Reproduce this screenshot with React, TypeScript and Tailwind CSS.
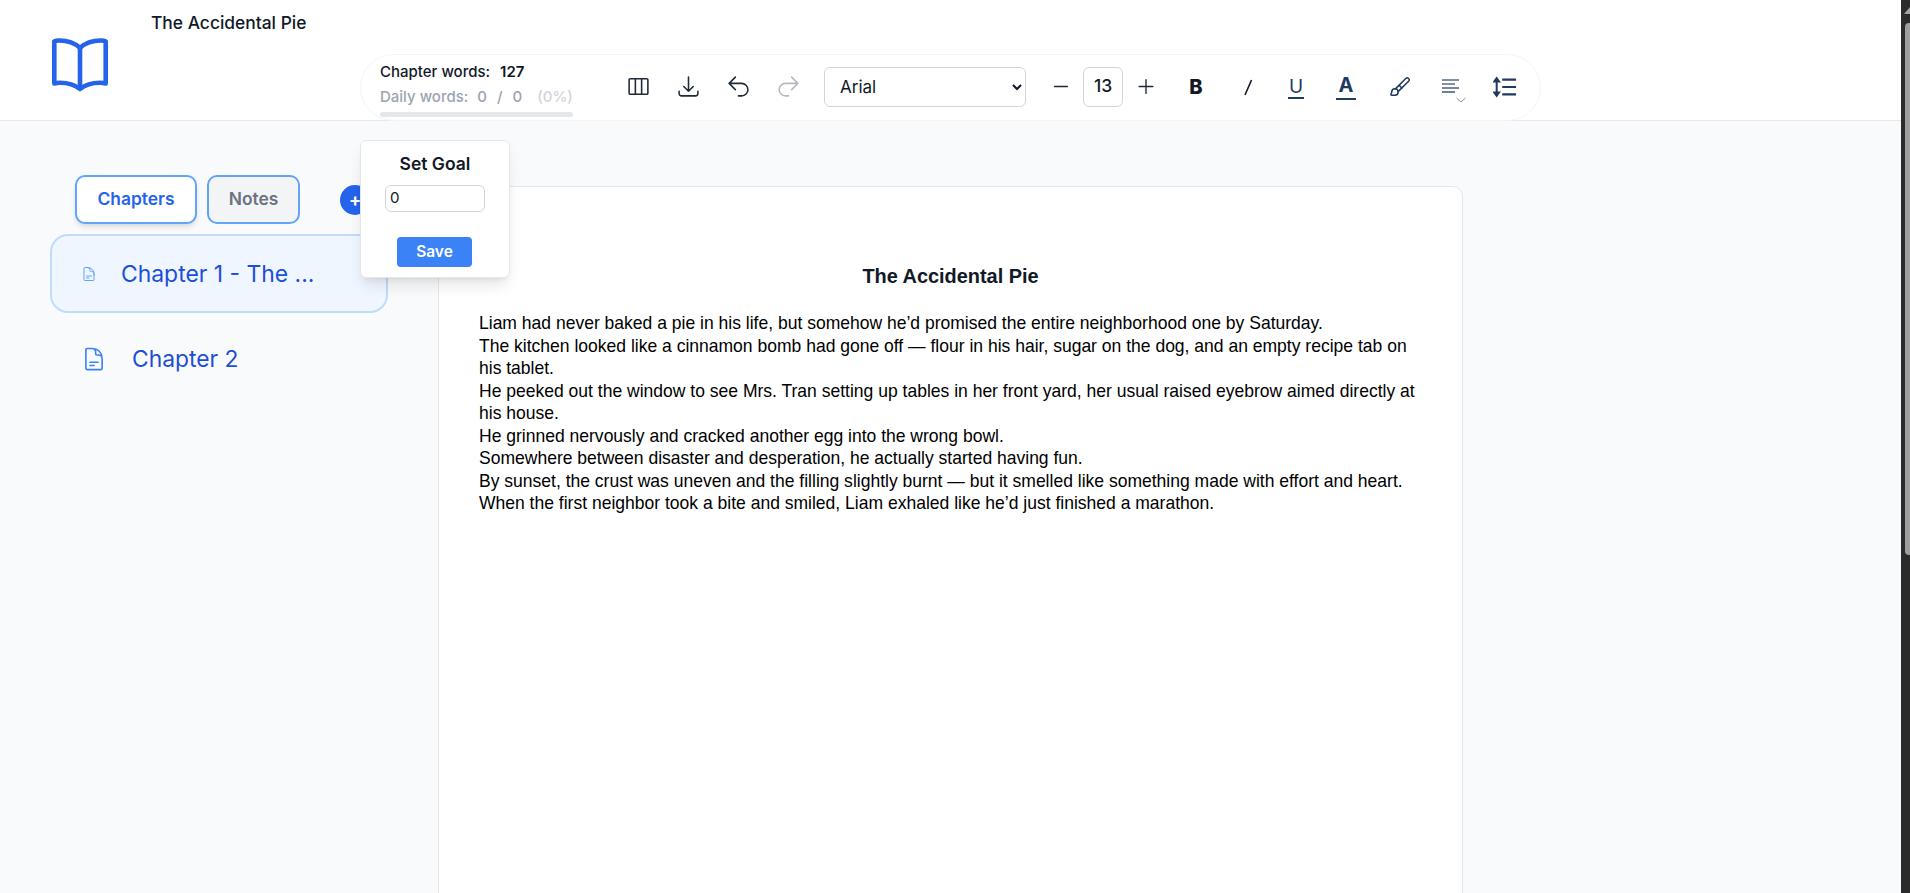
import React from "react";
import { Brush } from "lucide-react";
import {
  HiOutlineViewColumns,
  HiOutlineArrowDownTray,
  HiOutlineArrowUturnLeft,
  HiOutlineArrowUturnRight,
  HiOutlineMinus,
  HiOutlinePlus,
  HiOutlineDocumentText,
} from "react-icons/hi2";

const lines = [
  "Liam had never baked a pie in his life, but somehow he’d promised the entire neighborhood one by Saturday.",
  "The kitchen looked like a cinnamon bomb had gone off — flour in his hair, sugar on the dog, and an empty recipe tab on his tablet.",
  "He peeked out the window to see Mrs. Tran setting up tables in her front yard, her usual raised eyebrow aimed directly at his house.",
  "He grinned nervously and cracked another egg into the wrong bowl.",
  "Somewhere between disaster and desperation, he actually started having fun.",
  "By sunset, the crust was uneven and the filling slightly burnt — but it smelled like something made with effort and heart.",
  "When the first neighbor took a bite and smiled, Liam exhaled like he’d just finished a marathon.",
];

function Toolbar() {
  const ic = "w-[41px] flex justify-center items-center text-[#1f2937]";
  return (
    <div className="ml-[360px] mt-[54px] h-[67px] w-[1181px] rounded-[40px] border border-[#f3f4f6] flex items-center pl-[19px] pb-[2px] shrink-0">
      <div className="w-[194px] h-full flex flex-col shrink-0 pt-[7px]">
        <div className="text-[15px] leading-[20px] font-medium text-[#111827] whitespace-nowrap">
          Chapter words:<span className="ml-[10px] font-semibold">127</span>
        </div>
        <div className="text-[15px] leading-[20px] mt-[5px] font-medium text-[#9ca3af] whitespace-nowrap">
          Daily words:<span className="ml-[9px]">0</span><span className="ml-[10px]">/</span><span className="ml-[10px]">0</span><span className="ml-[15px] text-[#d1d5db]">(0%)</span>
        </div>
        <div className="mt-[5px] h-[5px] w-[193px] rounded-full bg-[#e5e7eb]" />
      </div>
      <div className="flex items-center ml-[44px]">
        <div className={ic}><HiOutlineViewColumns size={25} /></div>
        <div className={"ml-[9px] " + ic}><HiOutlineArrowDownTray size={25} /></div>
        <div className={"ml-[9px] " + ic}><HiOutlineArrowUturnLeft size={25} /></div>
        <div className={"ml-[9px] " + ic + " !text-[#b6b9bf]"}><HiOutlineArrowUturnRight size={25} /></div>
      </div>
      <select defaultValue="Arial" className="ml-[15px] w-[202px] h-[40px] rounded-[6px] border border-[#d1d5db] bg-white pl-[11px] text-[17px] text-[#111827] font-['Inter',sans-serif] shrink-0">
        <option>Arial</option>
      </select>
      <div className="ml-[24px] w-[22px] flex justify-center text-[#1f2937]"><HiOutlineMinus size={25} /></div>
      <div className="ml-[11px] w-[40px] h-[40px] rounded-[6px] border border-[#d1d5db] flex items-center justify-center text-[17.5px] font-medium text-[#111827]">13</div>
      <div className="ml-[12px] w-[22px] flex justify-center text-[#1f2937]"><HiOutlinePlus size={25} /></div>
      <div className="ml-[29px] w-[20px] flex justify-center text-[20px] leading-[24px] font-extrabold text-[#111827]">B</div>
      <div className="ml-[32px] w-[20px] flex justify-center text-[#111827]">
        <svg width="20" height="20" viewBox="0 0 20 20" fill="none" stroke="currentColor" strokeWidth="1.6"><path d="M13.500 3 7 18" /></svg>
      </div>
      <div className="ml-[28px] w-[20px] flex flex-col items-center text-[#1e3a5f] pt-[2px]">
        <span className="text-[19px] leading-[20px] font-normal">U</span>
        <div className="w-[16px] h-[2px] bg-[#1e3a5f]" />
      </div>
      <div className="ml-[30px] w-[20px] flex flex-col items-center text-[#1e3a5f]">
        <span className="text-[20px] leading-[22px] font-bold">A</span>
        <div className="w-[20px] h-[2px] mt-[2px] bg-[#1e3a5f]" />
      </div>
      <div className="ml-[33px] w-[22px] flex justify-center text-[#1e3a5f]">
        <Brush size={26} strokeWidth={1.6} />
      </div>
      <div className="ml-[29px] w-[20px] relative text-[#1e3a5f]">
        <svg width="20" height="18" viewBox="0 0 20 18" fill="none" stroke="currentColor"><path d="M2 2h17" opacity=".75" strokeWidth="1.5" /><path d="M2 6h13" opacity=".85" strokeWidth="1.3" /><path d="M2 10h17" strokeWidth="1.2" /><path d="M2 14h13" strokeWidth="1.3" /></svg>
        <svg width="10" height="6" viewBox="0 0 10 6" fill="none" stroke="#6b7280" strokeWidth=".8" className="absolute left-[16px] top-[19px]"><path d="M.500 1 5 5 9.500 1" /></svg>
      </div>
      <div className="ml-[33px] w-[24px] flex justify-center text-[#1e3a5f]">
        <svg width="26" height="24" viewBox="0 0 26 24" fill="none" stroke="currentColor" strokeWidth="2.200"><path d="M4 3v18" /><path d="M1.500 6 4 2.500 6.500 6Z" fill="currentColor" /><path d="M1.500 18 4 21.500 6.500 18Z" fill="currentColor" /><path d="M10 4h15M10 12h15M10 20h15" /></svg>
      </div>
    </div>
  );
}

export default function App() {
  return (
    <div className="h-screen flex overflow-hidden font-['Inter',sans-serif] bg-[#f9fafb]">
      <div className="flex-1 min-w-0 flex flex-col relative">
        <header className="h-[121px] shrink-0 bg-white border-b border-[#e5e7eb] relative flex">
          <svg width="60" height="58" viewBox="0 0 60 58" fill="none" stroke="#2563eb" strokeWidth="4.600" strokeLinejoin="round" className="absolute left-[50px] top-[36px]">
            <path d="M30 12C25 7 17 4.500 9 4.500C7 4.500 5.500 4.800 4.300 5.500V47.500C6 47 8 46.800 10 46.800C18 46.800 25 49 30 53C35 49 42 46.800 50 46.800C52 46.800 54 47 55.700 47.500V5.500C54.500 4.800 53 4.500 51 4.500C43 4.500 35 7 30 12ZM30 12V53" />
          </svg>
          <div className="absolute left-[151px] top-[11px] text-[17.4px] leading-[24px] font-medium text-[#111827]">The Accidental Pie</div>
          <Toolbar />
        </header>
        <div className="flex-1 flex min-h-0">
          <aside className="w-[438px] shrink-0 pl-[50px] pt-[54px] relative">
            <div className="flex items-center pl-[25px] h-[49px]">
              <div className="w-[122px] h-[49px] rounded-[10px] border-2 border-[#60a5fa] bg-white shadow-md flex items-center justify-center text-[17.4px] font-semibold text-[#2563eb]">Chapters</div>
              <div className="ml-[10px] w-[93px] h-[49px] rounded-[10px] border-2 border-[#60a5fa] bg-[#f3f4f6] flex items-center justify-center text-[17.4px] font-semibold text-[#6b7280]">Notes</div>
              <div className="ml-[40px] w-[30px] h-[30px] rounded-full bg-[#2563eb] text-white flex items-center justify-center text-[18px] font-bold">+</div>
            </div>
            <div className="mt-[10px] w-[338px] h-[79px] rounded-[18px] border-2 border-[#bfdbfe] bg-[#eff6ff] flex items-center pl-[29px] text-[#1d4ed8]">
              <HiOutlineDocumentText size={16} className="text-[#60a5fa]" />
              <span className="ml-[24px] text-[22.9px] leading-[30px]">Chapter 1 - The ...</span>
            </div>
            <div className="mt-[16px] flex items-center h-[60px] pl-[31px] text-[#1d4ed8]">
              <HiOutlineDocumentText size={26} className="text-[#3b82f6]" />
              <span className="ml-[25px] text-[22.8px] leading-[30px]">Chapter 2</span>
            </div>
          </aside>
          <main className="w-[1025px] h-[800px] shrink-0 mt-[65px] border border-[#e5e7eb] rounded-t-[10px] bg-white px-[40px] pt-[75px] font-['Liberation_Sans',Arial,sans-serif] text-black">
            <div className="text-center font-bold text-[19.9px] leading-[28px] text-[#111827]">The Accidental Pie</div>
            <div className="mt-[22px] text-[17.53px] leading-[22.5px]">
              {lines.map((l) => (<div key={l}>{l}</div>))}
            </div>
          </main>
        </div>
        <div className="absolute left-[360px] top-[140px] w-[150px] h-[138px] rounded-[6px] border border-[#e5e7eb] bg-white shadow-lg flex flex-col items-center pt-[12px]">
          <div className="text-[17.5px] leading-[22px] font-semibold text-[#111827]">Set Goal</div>
          <div className="mt-[10px] w-[100px] h-[27px] rounded-[6px] border border-[#d1d5db] bg-white pl-[4px] text-[15px] leading-[24px] text-[#111827]">0</div>
          <div className="mt-[25px] -ml-[1px] w-[75px] h-[30px] rounded-[4px] bg-[#3b82f6] text-white flex items-center justify-center text-[15.5px] font-semibold">Save</div>
        </div>
      </div>
      <div className="w-[9px] shrink-0 bg-[#2b2b2b] flex flex-col items-end">
        <div className="mt-[7px] w-0 h-0 border-l-[6px] border-r-0 border-b-[7px] border-l-transparent border-b-[#a3a3a3]" />
        <div className="mt-[9px] w-[5px] h-[532px] rounded-l-[4px] bg-[#9e9e9e]" />
      </div>
    </div>
  );
}
